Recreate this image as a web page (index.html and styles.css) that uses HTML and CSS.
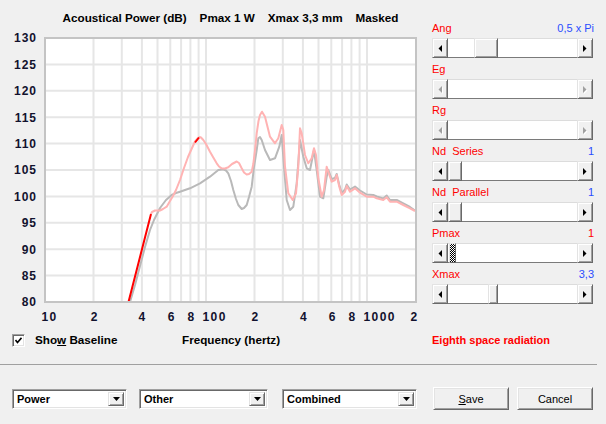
FILE: index.html
```html
<!DOCTYPE html>
<html>
<head>
<meta charset="utf-8">
<link rel="stylesheet" href="styles.css">
</head>
<body>
<div class="window">
  <div class="top">
    <div class="chart">
      <div class="title"><span>Acoustical Power (dB)</span><span>Pmax 1 W</span><span>Xmax 3,3 mm</span><span>Masked</span></div>
      <svg class="plot" width="432" height="300" viewBox="0 30 432 300">
        <rect x="45" y="38" width="371" height="264" fill="#fff"/>
        <path class="grid" d="M93.5 38V302M121.8 38V302M141.9 38V302M157.5 38V302M170.3 38V302M181.1 38V302M190.4 38V302M198.6 38V302M206 38V302M254.5 38V302M282.8 38V302M302.9 38V302M318.5 38V302M331.3 38V302M342.1 38V302M351.4 38V302M359.6 38V302M367 38V302M45 64.4H416M45 90.8H416M45 117.2H416M45 143.6H416M45 170H416M45 196.4H416M45 222.8H416M45 249.2H416M45 275.6H416"/>
        <polyline class="base" points="130,302 135,285 140,266 145,247 150,230 154,220 157,214 160,208 163,204 166,200 171.7,195 176,193 180,191.7 190,188.3 200,183.3 210,176.7 218.3,170 223.3,169.3 226,170.5 228.3,173.3 231,181 233.3,190 236,199 238.3,205 241.7,209 244,208 246.7,205 249,197 251.7,186.7 254,167 256.7,150 258.3,138.3 260,137 261.7,140 265,150 270,160 275,158.3 279.3,146.7 281.7,135 284,166.7 286.7,200 290,210 293.3,206.7 296.7,183.3 300,140 303.3,156.7 306.7,168.3 310,170 314,150 316.7,170 320,196.7 323.3,198.3 326.7,176.7 328.3,170 331.7,179 335,178 336.7,174 339.3,185 341.7,193 345,189.5 346.7,184.5 350,189.5 355,186.5 360,190.5 366.7,194.5 373.3,195 376.7,196.5 383.3,198.5 386.7,195.5 390,200 396.7,200 403.3,203.5 410,207 415,210.5"/>
        <polyline class="power" points="151,214 152,212 155,210.5 160,210.5 163,209 166.7,206.7 170,201 173,196 176,190 180,180 184,168 188,157 192,148 195,141.5 198,138 199.5,137 201,137.5 203.3,140 206,144 210,151.7 213,157 216.7,163.3 219,166.5 221.7,168.3 225,168.5 228.3,167.3 232,164 236.7,161.5 239,163 241.7,168.3 244,172.5 246.7,174.5 249,174 251.7,171.7 253.3,164 255,150 256.7,133.3 258.5,121 260,115 262,111.7 265,116.7 270,136.7 275,143.3 278.3,138.3 281.7,125 283.3,130 285,166.7 288.3,193.3 292.7,200 296,193.3 298.3,166.7 300,128.3 301.7,133.3 305,155 308.3,163.3 311.7,158.3 314,148.3 316,155 318.3,178.3 321.7,196.7 324,190 326.7,166.7 328.3,171.7 331.7,181.7 335,180 336.7,175 339.3,186.7 341.7,195 345,191.7 346.7,186 350,191.7 355,188.3 360,192.7 366.7,196.7 373.3,196.7 376.7,198.3 383.3,200 386.7,197.3 390,201.7 396.7,201.7 403.3,205 410,208.3 415,211"/>
        <path class="limit" d="M128.5 302L151 214M195 142.5L199 137.5"/>
        <rect class="frame" x="45" y="38" width="371" height="264"/>
        <g class="axis-y">
          <text x="37" y="42.3">130</text>
          <text x="37" y="68.7">125</text>
          <text x="37" y="95.1">120</text>
          <text x="37" y="121.5">115</text>
          <text x="37" y="147.9">110</text>
          <text x="37" y="174.3">105</text>
          <text x="37" y="200.7">100</text>
          <text x="37" y="227.1">95</text>
          <text x="37" y="253.5">90</text>
          <text x="37" y="279.9">85</text>
          <text x="37" y="306.3">80</text>
        </g>
        <g class="axis-x">
          <text x="41.5" y="320.7">10</text>
          <text x="90.8" y="320.7">2</text>
          <text x="138.6" y="320.7">4</text>
          <text x="167.8" y="320.7">6</text>
          <text x="187.4" y="320.7">8</text>
          <text x="202.5" y="320.7">100</text>
          <text x="251.5" y="320.7">2</text>
          <text x="299.9" y="320.7">4</text>
          <text x="328.8" y="320.7">6</text>
          <text x="348.4" y="320.7">8</text>
          <text x="363.5" y="320.7">1000</text>
          <text x="410.5" y="320.7">2</text>
        </g>
      </svg>
    </div>
    <div class="side">
      <div class="field-head"><span>Ang</span><span class="val">0,5 x Pi</span></div>
      <div class="sb">
        <div class="sb-btn"><svg class="arrow" width="4" height="7" viewBox="0 0 4 7"><polygon points="4,0 4,7 0.5,3.5"/></svg></div>
        <div class="sb-track"><div class="sb-thumb" style="margin-left:26px;width:24px"></div></div>
        <div class="sb-btn"><svg class="arrow" width="4" height="7" viewBox="0 0 4 7"><polygon points="0,0 0,7 3.5,3.5"/></svg></div>
      </div>
      <div class="field-head"><span>Eg</span></div>
      <div class="sb">
        <div class="sb-btn"><svg class="arrow off" width="4" height="7" viewBox="0 0 4 7"><polygon points="4,0 4,7 0.5,3.5"/></svg></div>
        <div class="sb-track"></div>
        <div class="sb-btn"><svg class="arrow off" width="4" height="7" viewBox="0 0 4 7"><polygon points="0,0 0,7 3.5,3.5"/></svg></div>
      </div>
      <div class="field-head"><span>Rg</span></div>
      <div class="sb">
        <div class="sb-btn"><svg class="arrow off" width="4" height="7" viewBox="0 0 4 7"><polygon points="4,0 4,7 0.5,3.5"/></svg></div>
        <div class="sb-track"></div>
        <div class="sb-btn"><svg class="arrow off" width="4" height="7" viewBox="0 0 4 7"><polygon points="0,0 0,7 3.5,3.5"/></svg></div>
      </div>
      <div class="field-head"><span>Nd&nbsp; Series</span><span class="val">1</span></div>
      <div class="sb">
        <div class="sb-btn"><svg class="arrow" width="4" height="7" viewBox="0 0 4 7"><polygon points="4,0 4,7 0.5,3.5"/></svg></div>
        <div class="sb-track"><div class="sb-thumb" style="margin-left:0;width:14px"></div></div>
        <div class="sb-btn"><svg class="arrow" width="4" height="7" viewBox="0 0 4 7"><polygon points="0,0 0,7 3.5,3.5"/></svg></div>
      </div>
      <div class="field-head"><span>Nd&nbsp; Parallel</span><span class="val">1</span></div>
      <div class="sb">
        <div class="sb-btn"><svg class="arrow" width="4" height="7" viewBox="0 0 4 7"><polygon points="4,0 4,7 0.5,3.5"/></svg></div>
        <div class="sb-track"><div class="sb-thumb" style="margin-left:0;width:14px"></div></div>
        <div class="sb-btn"><svg class="arrow" width="4" height="7" viewBox="0 0 4 7"><polygon points="0,0 0,7 3.5,3.5"/></svg></div>
      </div>
      <div class="field-head"><span>Pmax</span><span class="val red">1</span></div>
      <div class="sb">
        <div class="sb-btn"><svg class="arrow" width="4" height="7" viewBox="0 0 4 7"><polygon points="4,0 4,7 0.5,3.5"/></svg></div>
        <div class="sb-track"><div class="sb-thumb focus" style="margin-left:1px;width:7px"></div></div>
        <div class="sb-btn"><svg class="arrow" width="4" height="7" viewBox="0 0 4 7"><polygon points="0,0 0,7 3.5,3.5"/></svg></div>
      </div>
      <div class="field-head"><span>Xmax</span><span class="val">3,3</span></div>
      <div class="sb">
        <div class="sb-btn"><svg class="arrow" width="4" height="7" viewBox="0 0 4 7"><polygon points="4,0 4,7 0.5,3.5"/></svg></div>
        <div class="sb-track"><div class="sb-thumb" style="margin-left:40px;width:10px"></div></div>
        <div class="sb-btn"><svg class="arrow" width="4" height="7" viewBox="0 0 4 7"><polygon points="0,0 0,7 3.5,3.5"/></svg></div>
      </div>
    </div>
  </div>
  <div class="info">
    <div class="chk">
      <span class="box"><svg width="7" height="7" viewBox="0 0 7 7"><polyline points="0.5,3 2.5,5.5 6.5,0.8" fill="none" stroke="#000" stroke-width="1.6"/></svg></span>
      <span>Sho<u>w</u> Baseline</span>
    </div>
    <div class="freq">Frequency (hertz)</div>
    <div class="eighth">Eighth space radiation</div>
  </div>
  <div class="sep"></div>
  <div class="controls">
    <div class="combo w-power"><span class="combo-text">Power</span><span class="combo-btn"><svg width="7" height="4" viewBox="0 0 7 4"><polygon points="0,0 7,0 3.5,4"/></svg></span></div>
    <div class="combo w-other"><span class="combo-text">Other</span><span class="combo-btn"><svg width="7" height="4" viewBox="0 0 7 4"><polygon points="0,0 7,0 3.5,4"/></svg></span></div>
    <div class="combo w-comb"><span class="combo-text">Combined</span><span class="combo-btn"><svg width="7" height="4" viewBox="0 0 7 4"><polygon points="0,0 7,0 3.5,4"/></svg></span></div>
    <div class="btn save"><span><u>S</u>ave</span></div>
    <div class="btn cancel"><span>Cancel</span></div>
  </div>
</div>
</body>
</html>
```

FILE: styles.css
```css
* { box-sizing: border-box; }
body {
  margin: 0;
  background: #f0f0f0;
  font-family: "Liberation Sans", Arial, sans-serif;
  color: #000;
}
.window { width: 606px; height: 424px; overflow: hidden; }
.top { display: flex; height: 330px; }
.chart { width: 432px; flex: none; }
.title {
  margin-left: 45px;
  width: 371px;
  height: 30px;
  padding-top: 11px;
  font-size: 11.7px;
  font-weight: bold;
  line-height: 14px;
  text-align: center;
  white-space: nowrap;
}
.title span + span { margin-left: 13px; }
.plot { display: block; }
.grid { stroke: #e6e6e6; stroke-width: 2; fill: none; }
.frame { fill: none; stroke: #c4c4c4; stroke-width: 2; }
.base { fill: none; stroke: #b9b9b9; stroke-width: 2; stroke-linejoin: round; }
.power { fill: none; stroke: #ffb3b3; stroke-width: 2; stroke-linejoin: round; }
.limit { fill: none; stroke: #ff0000; stroke-width: 2; }
.axis-y text, .axis-x text {
  font-family: "Liberation Sans", Arial, sans-serif;
  font-size: 12px;
  font-weight: bold;
  fill: #12122e;
}
.axis-y text { text-anchor: end; letter-spacing: 1px; }
.axis-x text { letter-spacing: 1.4px; }

.side { width: 161px; flex: none; padding-top: 17px; }
.field-head {
  display: flex;
  justify-content: space-between;
  height: 21px;
  padding-top: 2px;
  line-height: 19px;
  font-size: 11px;
  color: #ff0000;
  white-space: nowrap;
}
.val { color: #2a4cff; margin-right: -1px; }
.val.red { color: #ff0000; }
.sb { display: flex; height: 20px; }
.sb-btn, .sb-thumb, .combo-btn {
  background: #f0f0f0;
  border: 1px solid;
  border-color: #e3e3e3 #696969 #696969 #e3e3e3;
  box-shadow: inset 1px 1px #fff, inset -1px -1px #a0a0a0;
}
.sb-btn {
  width: 16px;
  height: 20px;
  flex: none;
  display: flex;
  align-items: center;
  justify-content: center;
}
.arrow { display: block; fill: #000; }
.arrow.off { fill: #a0a0a0; filter: drop-shadow(1px 1px 0 #fff); }
.sb-track {
  flex: 1;
  display: flex;
  background: #fff;
  box-shadow: inset 0 1px #dcdcdc, inset 0 -1px #7a7a7a;
}
.sb-thumb { height: 20px; flex: none; }
.sb-thumb.focus {
  background: repeating-conic-gradient(#000 0 25%, #fff 0 50%) 0 0 / 2px 2px;
  box-shadow: none;
  border-color: #e3e3e3 #696969 #696969 #e3e3e3;
}

.info {
  display: grid;
  grid-template-columns: 170px 250px 1fr;
  align-items: start;
  padding-left: 12px;
  padding-top: 3px;
  height: 34px;
  line-height: 14px;
  font-size: 11.7px;
  font-weight: bold;
  white-space: nowrap;
}
.chk { display: flex; align-items: center; gap: 10px; height: 14px; }
.box {
  width: 13px;
  height: 13px;
  margin-top: 1px;
  background: #fff;
  border: 1px solid;
  border-color: #a0a0a0 #fff #fff #a0a0a0;
  box-shadow: inset 1px 1px #696969, inset -1px -1px #e3e3e3;
  display: flex;
  align-items: center;
  justify-content: center;
}
.box svg { display: block; }
.eighth { color: #ff0000; font-size: 11px; }
.sep { height: 1px; background: #a0a0a0; margin-right: 9px; }

.controls { display: flex; align-items: center; padding: 22px 0 0 12px; }
.combo {
  height: 20px;
  display: flex;
  align-items: center;
  background: #fff;
  border: 1px solid;
  border-color: #a0a0a0 #fff #fff #a0a0a0;
  box-shadow: inset 1px 1px #696969, inset -1px -1px #e3e3e3;
  padding: 2px 2px 2px 4px;
  font-size: 11px;
  font-weight: bold;
}
.combo-text { flex: 1; }
.combo-btn {
  width: 16px;
  height: 14px;
  display: flex;
  align-items: center;
  justify-content: center;
}
.combo-btn svg { display: block; fill: #000; }
.w-power { width: 115px; }
.w-other { width: 129px; margin-left: 12px; }
.w-comb { width: 135px; margin-left: 14px; }
.btn {
  width: 76px;
  height: 23px;
  display: flex;
  align-items: center;
  justify-content: center;
  background: #f0f0f0;
  border: 1px solid;
  border-color: #fff #696969 #696969 #fff;
  box-shadow: inset 1px 1px #e3e3e3, inset -1px -1px #a0a0a0;
  font-size: 11px;
}
.save { margin-left: 16px; }
.cancel { margin-left: 8px; }
```
